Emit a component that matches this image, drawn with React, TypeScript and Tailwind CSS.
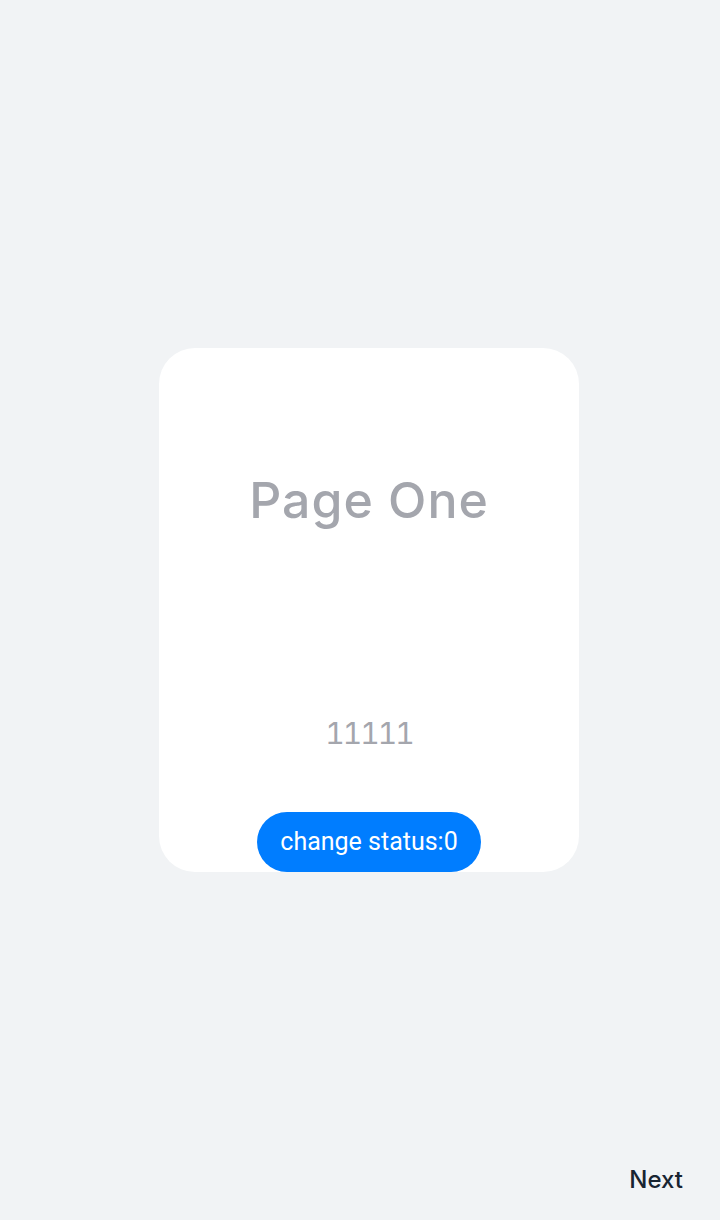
export default function App() {
  return (
    <div className="relative w-[720px] h-[1220px] bg-[#f1f3f5] flex items-center justify-center pl-[18px]" style={{ fontFamily: "Inter, 'Noto Sans', sans-serif" }}>
      <div className="w-[420px] h-[524px] bg-white rounded-[36px] flex flex-col items-center">
        <div className="mt-[122px] h-[60px] flex items-center text-[50px] font-medium tracking-[1px] text-[#a4a6ad] leading-none">Page One</div>
        <div className="mt-[183px] h-[40px] flex items-center text-[30px] tabular-nums tracking-[-2px] text-[#a4a6ad] leading-none">11111</div>
        <div className="mt-auto h-[60px] w-[224px] rounded-full bg-[#007dff] flex items-center justify-center text-white text-[25px] font-normal" style={{ fontFamily: "Roboto, sans-serif" }}>change status:0</div>
      </div>
      <div className="absolute right-[37px] bottom-[22px] text-[24px] font-medium text-[#182431]">Next</div>
    </div>
  );
}
